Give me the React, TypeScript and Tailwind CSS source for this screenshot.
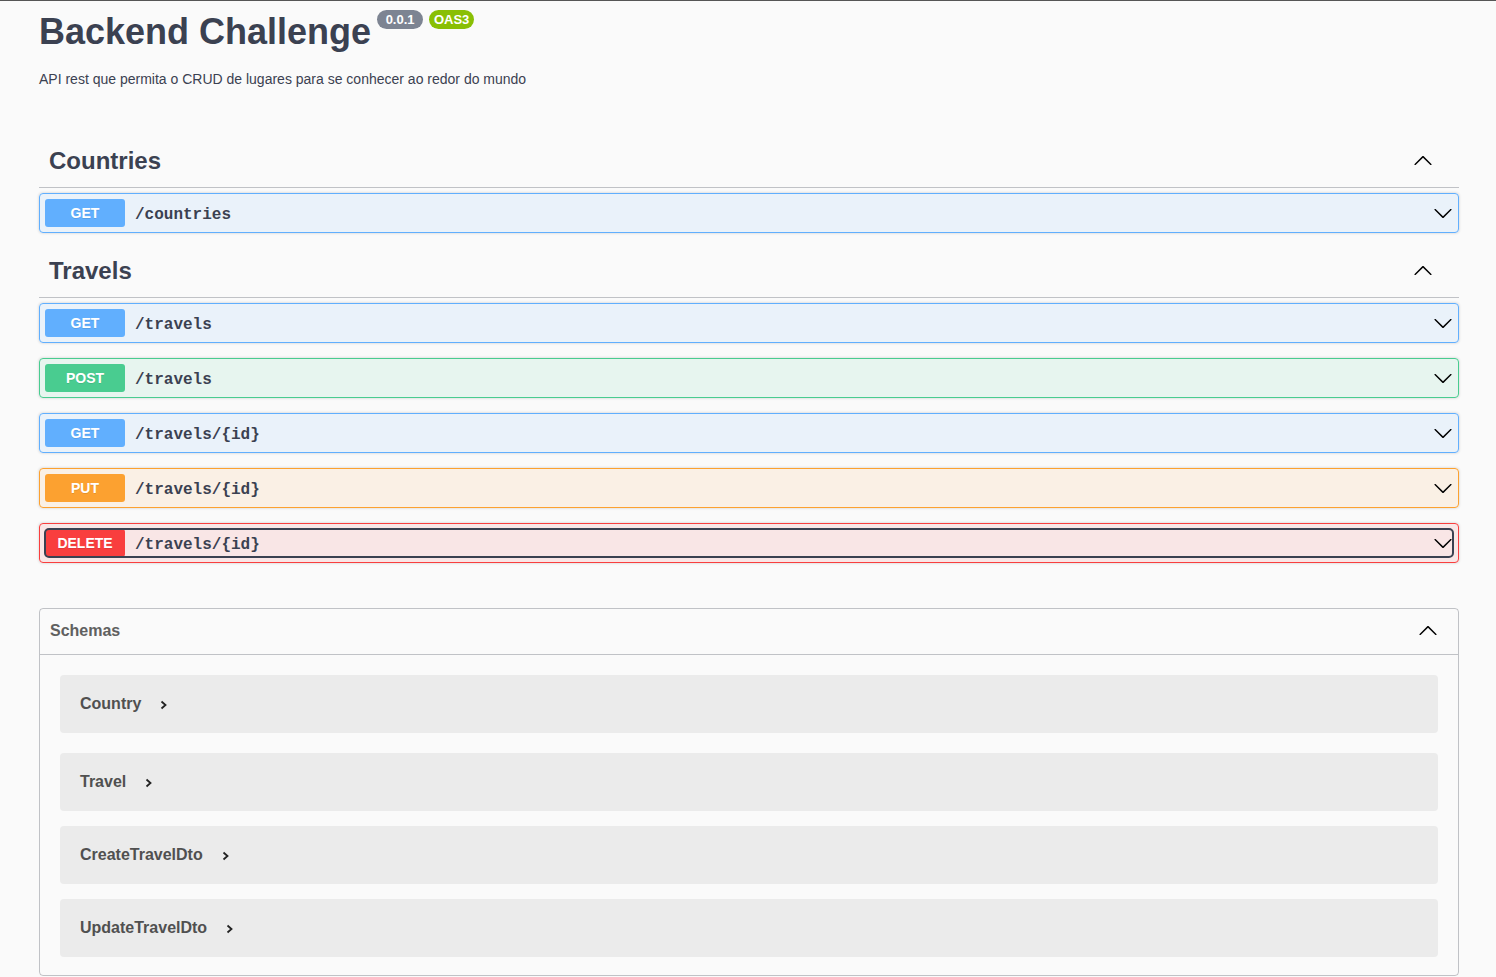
import React from "react";

type Op = { method: string; path: string; color: string; focused?: boolean };

const arrowPath =
  "M17.418 6.109c.272-.268.709-.268.979 0s.271.701 0 .969l-7.908 7.83c-.27.268-.707.268-.979 0l-7.908-7.83c-.27-.268-.27-.701 0-.969.271-.268.709-.268.979 0L10 13.25l7.418-7.141z";

const Arrow = ({ up }: { up?: boolean }) => (
  <svg
    width="20"
    height="20"
    viewBox="0 0 20 20"
    className={up ? "rotate-180 shrink-0" : "shrink-0"}
    fill="#000"
  >
    <path d={arrowPath} />
  </svg>
);

const styles: Record<string, { row: string; badge: string }> = {
  get: { row: "border-[#61affe] bg-[#61affe]/10", badge: "bg-[#61affe]" },
  post: { row: "border-[#49cc90] bg-[#49cc90]/10", badge: "bg-[#49cc90]" },
  put: { row: "border-[#fca130] bg-[#fca130]/10", badge: "bg-[#fca130]" },
  delete: { row: "border-[#f93e3e] bg-[#f93e3e]/10", badge: "bg-[#f93e3e]" },
};

const OpRow = ({ op }: { op: Op }) => {
  const s = styles[op.color];
  return (
    <div
      className={`mb-[15px] rounded-[4px] border p-[5px] shadow-[0_0_3px_rgba(0,0,0,0.19)] ${s.row}`}
    >
      <div
        className={`flex items-center rounded-[4px] ${
          op.focused ? "outline-2 outline-solid outline-[#3b4151] -outline-offset-1" : ""
        }`}
      >
        <span
          className={`w-[80px] shrink-0 rounded-[3px] py-[6px] text-center text-[14px] font-bold leading-[16px] text-white [text-shadow:0_1px_0_rgba(0,0,0,0.1)] ${s.badge}`}
        >
          {op.method}
        </span>
        <span className="mt-[4px] flex-1 px-[10px] font-['Liberation_Mono',monospace] text-[16px] font-bold text-[#3b4151]">
          {op.path}
        </span>
        <Arrow />
      </div>
    </div>
  );
};

const Tag = ({ name, ops }: { name: string; ops: Op[] }) => (
  <div>
    <div className="mb-[5px] flex items-center border-b border-[#3b4151]/30 pb-[12px] pl-[10px] pr-[26px] pt-[8px]">
      <h3 className="flex-1 text-[24px] font-bold leading-[29px] text-[#3b4151]">{name}</h3>
      <Arrow up />
    </div>
    {ops.map((op, i) => (
      <OpRow key={i} op={op} />
    ))}
  </div>
);

const schemas = ["Country", "Travel", "CreateTravelDto", "UpdateTravelDto"];

export default function App() {
  return (
    <div className="min-h-[977px] bg-[#fafafa] font-['Liberation_Sans',Arial,sans-serif] text-[#3b4151]">
      <div className="h-px bg-[#555]" />
      <div className="ml-[39px] w-[1420px]">
        <div className="mt-[13px] flex items-start">
          <h1 className="text-[36px] font-bold leading-[36px] text-[#3b4151]">Backend Challenge</h1>
          <span className="ml-[6px] -mt-[4px] flex h-[19px] w-[46px] items-center justify-center rounded-full bg-[#7d8492] text-[13px] font-bold text-white">
            0.0.1
          </span>
          <span className="ml-[6px] -mt-[4px] flex h-[19px] w-[45px] items-center justify-center rounded-full bg-[#89bf04] text-[13px] font-bold text-white">
            OAS3
          </span>
        </div>
        <p className="mt-[19px] text-[14px] leading-[20px]">
          API rest que permita o CRUD de lugares para se conhecer ao redor do mundo
        </p>

        <div className="mt-[49px]">
          <Tag name="Countries" ops={[{ method: "GET", path: "/countries", color: "get" }]} />
          <Tag
            name="Travels"
            ops={[
              { method: "GET", path: "/travels", color: "get" },
              { method: "POST", path: "/travels", color: "post" },
              { method: "GET", path: "/travels/{id}", color: "get" },
              { method: "PUT", path: "/travels/{id}", color: "put" },
              { method: "DELETE", path: "/travels/{id}", color: "delete", focused: true },
            ]}
          />
        </div>

        <div className="mt-[45px] rounded-[4px] border border-[#3b4151]/30">
          <div className="flex items-center border-b border-[#3b4151]/30 pb-[11px] pl-[10px] pr-[20px] pt-[9px]">
            <h4 className="flex-1 text-[16px] font-bold leading-[25px] text-[#606060]">Schemas</h4>
            <Arrow up />
          </div>
          <div className="px-[20px] pb-[18px] pt-[20px]">
            {schemas.map((name, i) => (
              <div
                key={name}
                className={`flex h-[58px] items-center rounded-[4px] bg-[#ebebeb] px-[20px] ${
                  i === 0 ? "mb-[20px]" : i < schemas.length - 1 ? "mb-[15px]" : ""
                }`}
              >
                <span className="text-[16px] font-bold text-[#505050]">{name}</span>
                <svg width="10" height="12" viewBox="0 0 10 12" className="ml-[18px] mt-[2px]">
                  <polyline
                    points="2.5,2.5 6.5,6 2.5,9.5"
                    fill="none"
                    stroke="#222"
                    strokeWidth="1.8"
                  />
                </svg>
              </div>
            ))}
          </div>
        </div>
      </div>
    </div>
  );
}
